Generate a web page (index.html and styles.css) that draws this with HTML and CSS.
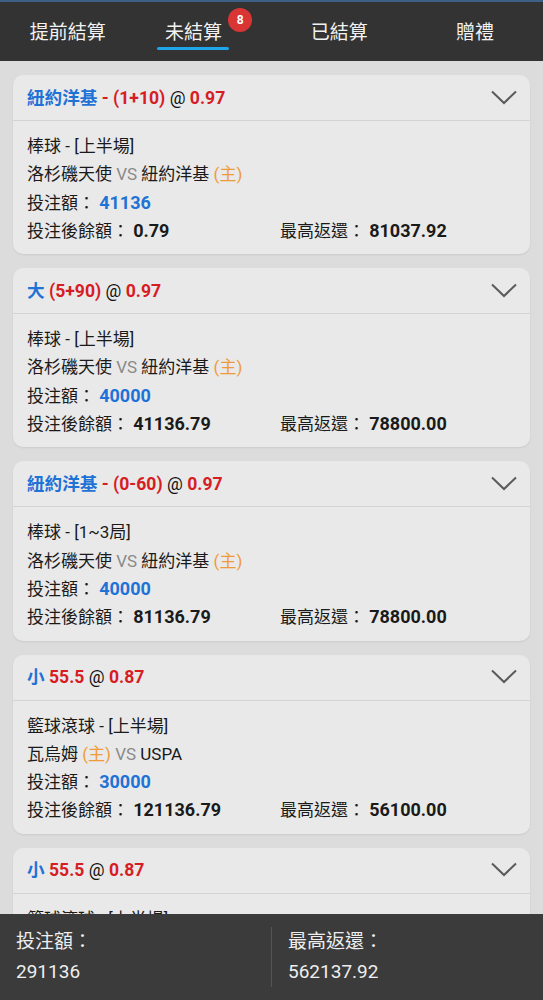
FILE: index.html
```html
<!DOCTYPE html>
<html lang="zh-Hant">
<head>
  <meta charset="UTF-8">
  <meta name="viewport" content="width=device-width, initial-scale=1.0">
  <title>未結算</title>
  <link rel="stylesheet" href="styles.css">
</head>
<body>
  <div class="tabs">
    <div class="tab">提前結算</div>
    <div class="tab active"><span class="tab-label">未結算<span class="badge">8</span></span></div>
    <div class="tab">已結算</div>
    <div class="tab">贈禮</div>
  </div>

  <div class="list">
    <div class="card">
      <div class="card-head">
        <div class="title"><span class="blue">紐約洋基</span> <span class="red">- (1+10)</span> <span class="at">@</span> <span class="red">0.97</span></div>
        <svg class="chev" width="26" height="15" viewBox="0 0 26 15"><polyline points="1,1.5 13,13 25,1.5" fill="none" stroke="#5a5a5a" stroke-width="2"/></svg>
      </div>
      <div class="card-body">
        <div class="line">棒球 - [上半場]</div>
        <div class="line">洛杉磯天使 <span class="vs">VS</span> 紐約洋基 <span class="home">(主)</span></div>
        <div class="line">投注額： <b class="amount">41136</b></div>
        <div class="line row"><span>投注後餘額： <b>0.79</b></span><span>最高返還： <b>81037.92</b></span></div>
      </div>
    </div>

    <div class="card">
      <div class="card-head">
        <div class="title"><span class="blue">大</span> <span class="red">(5+90)</span> <span class="at">@</span> <span class="red">0.97</span></div>
        <svg class="chev" width="26" height="15" viewBox="0 0 26 15"><polyline points="1,1.5 13,13 25,1.5" fill="none" stroke="#5a5a5a" stroke-width="2"/></svg>
      </div>
      <div class="card-body">
        <div class="line">棒球 - [上半場]</div>
        <div class="line">洛杉磯天使 <span class="vs">VS</span> 紐約洋基 <span class="home">(主)</span></div>
        <div class="line">投注額： <b class="amount">40000</b></div>
        <div class="line row"><span>投注後餘額： <b>41136.79</b></span><span>最高返還： <b>78800.00</b></span></div>
      </div>
    </div>

    <div class="card">
      <div class="card-head">
        <div class="title"><span class="blue">紐約洋基</span> <span class="red">- (0-60)</span> <span class="at">@</span> <span class="red">0.97</span></div>
        <svg class="chev" width="26" height="15" viewBox="0 0 26 15"><polyline points="1,1.5 13,13 25,1.5" fill="none" stroke="#5a5a5a" stroke-width="2"/></svg>
      </div>
      <div class="card-body">
        <div class="line">棒球 - [1~3局]</div>
        <div class="line">洛杉磯天使 <span class="vs">VS</span> 紐約洋基 <span class="home">(主)</span></div>
        <div class="line">投注額： <b class="amount">40000</b></div>
        <div class="line row"><span>投注後餘額： <b>81136.79</b></span><span>最高返還： <b>78800.00</b></span></div>
      </div>
    </div>

    <div class="card">
      <div class="card-head">
        <div class="title"><span class="blue">小</span> <span class="red">55.5</span> <span class="at">@</span> <span class="red">0.87</span></div>
        <svg class="chev" width="26" height="15" viewBox="0 0 26 15"><polyline points="1,1.5 13,13 25,1.5" fill="none" stroke="#5a5a5a" stroke-width="2"/></svg>
      </div>
      <div class="card-body">
        <div class="line">籃球滾球 - [上半場]</div>
        <div class="line">瓦烏姆 <span class="home">(主)</span> <span class="vs">VS</span> USPA</div>
        <div class="line">投注額： <b class="amount">30000</b></div>
        <div class="line row"><span>投注後餘額： <b>121136.79</b></span><span>最高返還： <b>56100.00</b></span></div>
      </div>
    </div>

    <div class="card">
      <div class="card-head">
        <div class="title"><span class="blue">小</span> <span class="red">55.5</span> <span class="at">@</span> <span class="red">0.87</span></div>
        <svg class="chev" width="26" height="15" viewBox="0 0 26 15"><polyline points="1,1.5 13,13 25,1.5" fill="none" stroke="#5a5a5a" stroke-width="2"/></svg>
      </div>
      <div class="card-body">
        <div class="line">籃球滾球 - [上半場]</div>
      </div>
    </div>
  </div>

  <div class="summary">
    <div class="sum-col">
      <div>投注額：</div>
      <div>291136</div>
    </div>
    <div class="sum-col sum-right">
      <div>最高返還：</div>
      <div>562137.92</div>
    </div>
  </div>
</body>
</html>
```

FILE: styles.css
```css
body {
  margin: 0;
  height: 100vh;
  display: flex;
  flex-direction: column;
  font-family: Roboto, "Noto Sans CJK TC", sans-serif;
  background: #dcdcdc;
  color: #1a1a1a;
}
.tabs {
  display: flex;
  flex-shrink: 0;
  height: 59px;
  background: #333333;
  border-top: 2px solid #3e5f86;
}
.tab {
  flex: 1;
  display: flex;
  justify-content: center;
  align-items: center;
  color: #f2f2f2;
  font-size: 19px;
  padding-bottom: 2px;
}
.tab-label {
  position: relative;
  margin-right: 20px;
}
.active .tab-label::after {
  content: "";
  position: absolute;
  left: -8px;
  right: -7px;
  bottom: -6px;
  height: 3px;
  border-radius: 2px;
  background: #1ea5ea;
}
.badge {
  position: absolute;
  top: -9px;
  right: -30px;
  width: 24px;
  height: 24px;
  border-radius: 50%;
  background: #d93535;
  color: #fff;
  font-size: 12px;
  font-weight: bold;
  line-height: 24px;
  text-align: center;
}
.list {
  flex: 1;
  overflow: hidden;
  display: flex;
  flex-direction: column;
  gap: 14px;
  padding: 14px 13px 0;
}
.card {
  flex-shrink: 0;
  background: #e9e9e9;
  border-radius: 10px;
  box-shadow: 0 1px 2px rgba(0,0,0,0.08);
}
.card-head {
  display: flex;
  justify-content: space-between;
  align-items: center;
  height: 46px;
  padding: 0 14px 3px;
  box-sizing: border-box;
  border-bottom: 1px solid #d3d3d3;
}
.title {
  font-size: 17.6px;
  font-weight: bold;
}
.blue {
  color: #1f72d6;
}
.red {
  color: #d71d24;
}
.at {
  font-weight: normal;
  color: #111;
}
.chev {
  margin-right: -1px;
  margin-top: 2px;
}
.card-body {
  padding: 11px 14px 9px;
  font-size: 17px;
}
.line {
  line-height: 28.3px;
}
.line b {
  font-size: 18px;
}
.vs {
  color: #8a8a8a;
}
.home {
  color: #ef9b3a;
}
.amount {
  color: #1f72d6;
}
.row {
  display: grid;
  grid-template-columns: 253px 1fr;
}
.summary {
  flex-shrink: 0;
  height: 86px;
  display: flex;
  align-items: center;
  background: #3b3b3b;
  color: #eeeeee;
  font-size: 19px;
  line-height: 30px;
}
.sum-col {
  width: 256px;
  padding-left: 16px;
}
.sum-right {
  border-left: 1px solid #555;
  padding-left: 16px;
}
```
